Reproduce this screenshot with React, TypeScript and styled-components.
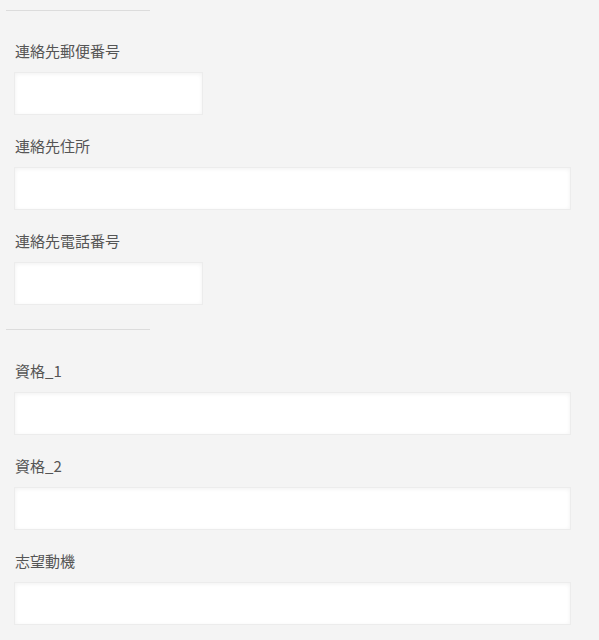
import styled, { createGlobalStyle } from "styled-components";

const GlobalStyle = createGlobalStyle`
  html, body {
    margin: 0;
    padding: 0;
    background: #f4f4f4;
    font-family: "Noto Sans CJK JP", "Noto Sans", sans-serif;
  }
`;

const Page = styled.div`
  padding: 10px 0 0 6px;
  width: 599px;
  box-sizing: border-box;
`;

const Divider = styled.hr`
  width: 144px;
  height: 1px;
  margin: 0 0 30px 0;
  border: 0;
  background: #dcdcdc;
`;

const Section = styled.section`
  display: flex;
  flex-direction: column;

  & + ${Divider} {
    margin-bottom: 31px;
  }
`;

const Field = styled.div`
  display: flex;
  flex-direction: column;
  padding-left: 8px;
  margin-bottom: 21px;

  &:last-child {
    margin-bottom: 24px;
  }
`;

const Label = styled.label`
  display: block;
  padding-left: 1px;
  font-size: 15px;
  line-height: 20px;
  color: #555;
  margin-bottom: 11px;
`;

const Input = styled.input<{ $short?: boolean }>`
  box-sizing: border-box;
  width: ${({ $short }) => ($short ? "189px" : "557px")};
  height: 43px;
  margin: 0;
  padding: 0 10px;
  border: 1px solid #ececec;
  background: #fff;
  box-shadow: inset 0 1px 4px rgba(0, 0, 0, 0.06);
  font: inherit;
  outline: none;
`;

type FieldDef = { label: string; short?: boolean };

const contact: FieldDef[] = [
  { label: "連絡先郵便番号", short: true },
  { label: "連絡先住所" },
  { label: "連絡先電話番号", short: true },
];

const qualifications: FieldDef[] = [
  { label: "資格_1" },
  { label: "資格_2" },
  { label: "志望動機" },
];

function FormSection({ fields }: { fields: FieldDef[] }) {
  return (
    <Section>
      {fields.map((f) => (
        <Field key={f.label}>
          <Label>{f.label}</Label>
          <Input type="text" $short={f.short} />
        </Field>
      ))}
    </Section>
  );
}

export default function App() {
  return (
    <>
      <GlobalStyle />
      <Page>
        <Divider />
        <FormSection fields={contact} />
        <Divider />
        <FormSection fields={qualifications} />
      </Page>
    </>
  );
}
